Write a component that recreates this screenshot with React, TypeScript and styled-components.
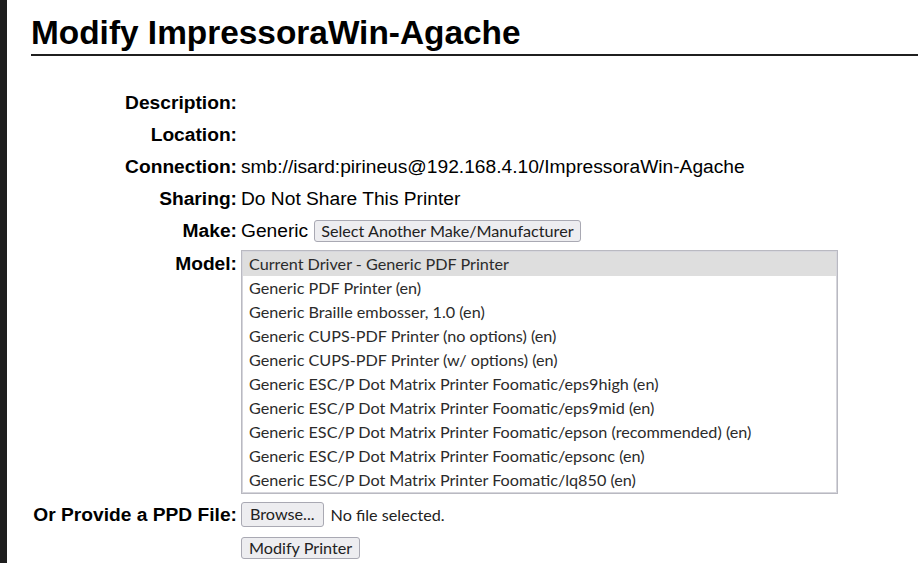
import React from "react";
import styled, { createGlobalStyle } from "styled-components";

const GlobalStyle = createGlobalStyle`
  html, body { margin: 0; padding: 0; background: #ffffff; }
  body { font-family: "Liberation Sans", Arial, sans-serif; color: #000; }
`;

const uiFont = `"Lato", "Noto Sans", sans-serif`;

const Page = styled.div`
  display: flex;
  min-height: 563px;
  overflow: hidden;
`;

const Strip = styled.div`
  width: 7px;
  flex: 0 0 7px;
  background: #1e1e1e;
`;

const Main = styled.main`
  flex: 1;
  padding-left: 24px;
`;

const Title = styled.h1`
  margin: 14px 0 0;
  font-size: 33.4px;
  line-height: 38px;
  font-weight: 700;
  padding-bottom: 2px;
  border-bottom: 2px solid #1f1f1f;
  white-space: nowrap;
`;

const Form = styled.div`
  display: flex;
  flex-direction: column;
  padding-top: 31px;
`;

const Row = styled.div<{ pad?: string }>`
  display: flex;
  align-items: flex-start;
  padding: ${(p) => p.pad || "5px 0"};
`;

const Label = styled.div<{ top?: number }>`
  width: 206px;
  flex: 0 0 206px;
  text-align: right;
  font-size: 19.2px;
  font-weight: 700;
  line-height: 22px;
  padding-top: ${(p) => p.top || 0}px;
  white-space: nowrap;
`;

const Value = styled.div`
  display: flex;
  align-items: center;
  gap: 6px;
  padding-left: 4px;
  font-size: 19.2px;
  line-height: 22px;
  white-space: nowrap;
`;

const Button = styled.button<{ h?: number; px?: number }>`
  font-family: ${uiFont};
  font-size: 16.2px;
  color: #222;
  background: #ededf0;
  border: 1px solid #a9a9b3;
  border-radius: 3px;
  height: ${(p) => p.h || 22}px;
  padding: 0 ${(p) => p.px ?? 6}px;
  line-height: 1;
  cursor: default;
`;

const Note = styled.span`
  font-family: ${uiFont};
  font-size: 16.2px;
  color: #222;
  padding-left: 1px;
`;

const ListBox = styled.div`
  width: 593px;
  border: 1px solid #b9b9c1;
  box-shadow: inset 0 0 0 1px #d6d6dc;
  padding: 1px;
  background: #fff;
`;

const Option = styled.div<{ selected?: boolean }>`
  height: 24px;
  line-height: 24px;
  padding-left: 6px;
  font-family: ${uiFont};
  font-size: 16.2px;
  color: #2b2b2b;
  background: ${(p) => (p.selected ? "#dedede" : "transparent")};
  white-space: nowrap;
`;

const models = [
  "Current Driver - Generic PDF Printer",
  "Generic PDF Printer (en)",
  "Generic Braille embosser, 1.0 (en)",
  "Generic CUPS-PDF Printer (no options) (en)",
  "Generic CUPS-PDF Printer (w/ options) (en)",
  "Generic ESC/P Dot Matrix Printer Foomatic/eps9high (en)",
  "Generic ESC/P Dot Matrix Printer Foomatic/eps9mid (en)",
  "Generic ESC/P Dot Matrix Printer Foomatic/epson (recommended) (en)",
  "Generic ESC/P Dot Matrix Printer Foomatic/epsonc (en)",
  "Generic ESC/P Dot Matrix Printer Foomatic/lq850 (en)",
];

export default function App() {
  return (
    <Page>
      <GlobalStyle />
      <Strip />
      <Main>
        <Title>Modify ImpressoraWin-Agache</Title>
        <Form>
          <Row>
            <Label>Description:</Label>
            <Value />
          </Row>
          <Row>
            <Label>Location:</Label>
            <Value />
          </Row>
          <Row>
            <Label>Connection:</Label>
            <Value>smb://isard:pirineus@192.168.4.10/ImpressoraWin-Agache</Value>
          </Row>
          <Row>
            <Label>Sharing:</Label>
            <Value>Do Not Share This Printer</Value>
          </Row>
          <Row>
            <Label>Make:</Label>
            <Value>
              Generic <Button>Select Another Make/Manufacturer</Button>
            </Value>
          </Row>
          <Row pad="3px 0">
            <Label top={3}>Model:</Label>
            <Value>
              <ListBox>
                {models.map((m, i) => (
                  <Option key={m} selected={i === 0}>
                    {m}
                  </Option>
                ))}
              </ListBox>
            </Value>
          </Row>
          <Row pad="5px 0 5px">
            <Label top={2}>Or Provide a PPD File:</Label>
            <Value>
              <Button h={25} px={8}>Browse...</Button>
              <Note>No file selected.</Note>
            </Value>
          </Row>
          <Row pad="5px 0">
            <Label />
            <Value>
              <Button px={7}>Modify Printer</Button>
            </Value>
          </Row>
        </Form>
      </Main>
    </Page>
  );
}
